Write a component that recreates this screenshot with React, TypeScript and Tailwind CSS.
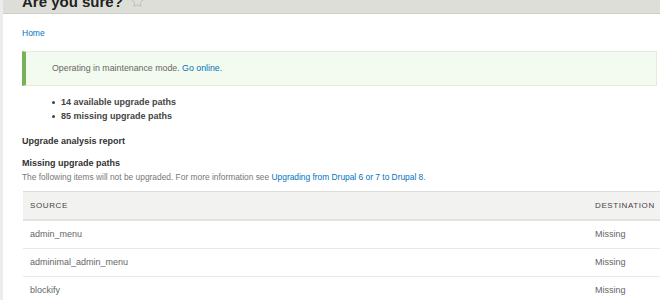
import React from 'react';
import { Star } from 'lucide-react';

const rows = [
  { source: 'admin_menu', destination: 'Missing' },
  { source: 'adminimal_admin_menu', destination: 'Missing' },
  { source: 'blockify', destination: 'Missing' },
];

const App: React.FC = () => {
  return (
    <div
      className="w-[660px] h-[300px] overflow-hidden bg-white text-[#555] border-l-[3px] border-[#ececec]"
      style={{ fontFamily: '"Liberation Sans", Arial, sans-serif' }}
    >
      {/* Header */}
      <div className="h-[14px] bg-[#deded8] border-b border-[#cfcfc9] overflow-hidden">
        <div className="flex items-center gap-[8px] pl-[19px] mt-[-6px]">
          <h1 className="text-[15px] leading-[15px] font-bold text-[#222]">Are you sure?</h1>
          <Star className="w-[13px] h-[13px] text-[#b8b8b2]" strokeWidth={1.5} />
        </div>
      </div>

      <div className="pl-[19px] pr-[3px]">
        <div className="pt-[14px] text-[8.5px] leading-[10px] text-[#0074bd]">Home</div>

        {/* Status message */}
        <div className="mt-[13px] h-[35px] flex items-center bg-[#f3faef] border border-[#e2eedb] border-l-[4px] border-l-[#77b259] pl-[26px]">
          <p className="text-[8.8px] text-[#666]">
            Operating in maintenance mode. <span className="text-[#0074bd]">Go online.</span>
          </p>
        </div>

        <ul className="mt-[9px] pl-[30px] text-[9px] leading-[14px] font-bold text-[#444]">
          <li className="flex items-center gap-[6px]">
            <span className="w-[3px] h-[3px] rounded-full bg-[#444]" />14 available upgrade paths
          </li>
          <li className="flex items-center gap-[6px]">
            <span className="w-[3px] h-[3px] rounded-full bg-[#444]" />85 missing upgrade paths
          </li>
        </ul>

        <h2 className="mt-[13px] text-[9px] leading-[10px] font-bold text-[#333]">Upgrade analysis report</h2>
        <h3 className="mt-[12px] text-[9px] leading-[10px] font-bold text-[#333]">Missing upgrade paths</h3>
        <p className="mt-[4px] text-[8.4px] leading-[10px] text-[#777] whitespace-nowrap">
          The following items will not be upgraded. For more information see{' '}
          <span className="text-[#0074bd]">Upgrading from Drupal 6 or 7 to Drupal 8</span>.
        </p>

        {/* Table */}
        <div className="mt-[9px] ml-[1px] w-[660px] border-t border-[#dcdcd8]">
          <div className="flex items-center h-[29px] bg-[#f2f2f0] border-b-2 border-[#e2e2de] text-[8px] text-[#444] tracking-[0.6px]">
            <div className="flex-1 pl-[7px]">SOURCE</div>
            <div className="w-[88px]">DESTINATION</div>
          </div>
          {rows.map((row) => (
            <div
              key={row.source}
              className="flex items-center h-[28px] border-b border-[#e8e8e4] text-[9px] text-[#666]"
            >
              <div className="flex-1 pl-[7px]">{row.source}</div>
              <div className="w-[88px]">{row.destination}</div>
            </div>
          ))}
        </div>
      </div>
    </div>
  );
};

export default App;
